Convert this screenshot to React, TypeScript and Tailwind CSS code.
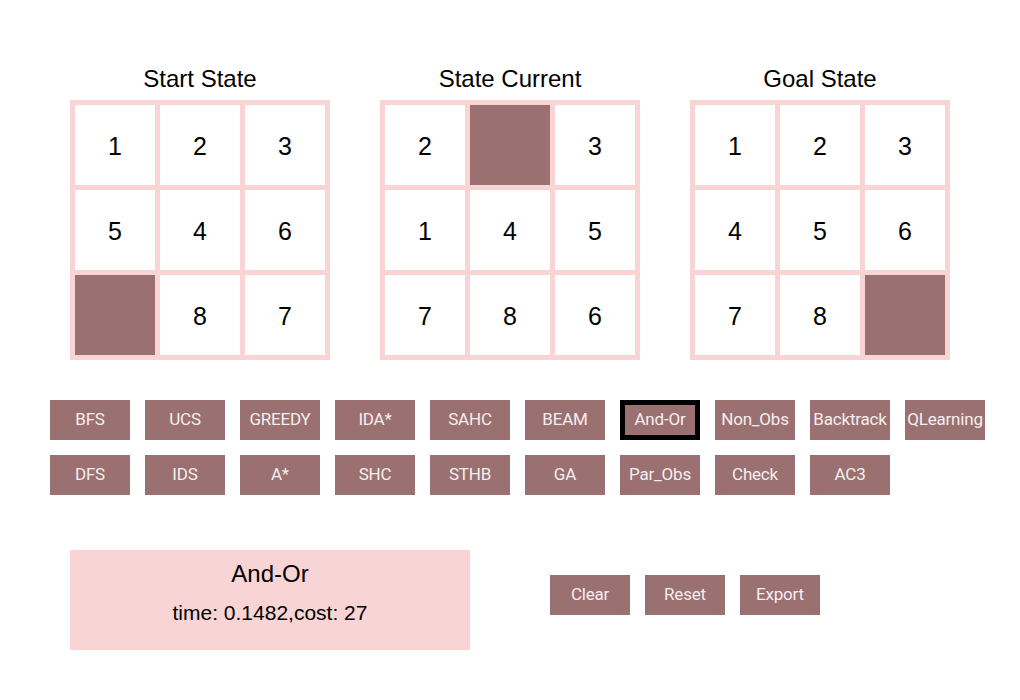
const brown = 'bg-[#9a7070]';

const boards = [
  { title: 'Start State', cells: [1, 2, 3, 5, 4, 6, 0, 8, 7] },
  { title: 'State Current', cells: [2, 0, 3, 1, 4, 5, 7, 8, 6] },
  { title: 'Goal State', cells: [1, 2, 3, 4, 5, 6, 7, 8, 0] },
];

const algos = [
  'BFS', 'UCS', 'GREEDY', 'IDA*', 'SAHC', 'BEAM', 'And-Or', 'Non_Obs', 'Backtrack', 'QLearning',
  'DFS', 'IDS', 'A*', 'SHC', 'STHB', 'GA', 'Par_Obs', 'Check', 'AC3',
];

const Board = ({ title, cells }: { title: string; cells: number[] }) => (
  <div className="flex flex-col items-center">
    <div className="text-[24px] leading-[28px] text-black mb-[7px]">{title}</div>
    <div className="grid grid-cols-[repeat(3,80px)] gap-[5px] bg-[#f8d4d4] p-[5px]">
      {cells.map((n, i) =>
        n === 0 ? (
          <div key={i} className={`w-[80px] h-[80px] ${brown}`} />
        ) : (
          <div key={i} className="w-[80px] h-[80px] bg-white flex items-center justify-center text-[25px] leading-none pt-[3px] text-black">
            {n}
          </div>
        )
      )}
    </div>
  </div>
);

const Btn = ({ label, active = false }: { label: string; active?: boolean }) => (
  <button
    className={`w-[80px] h-[40px] ${brown} text-[#f6eeee] text-[17px] tracking-[-0.2px] flex items-center justify-center whitespace-nowrap overflow-visible ${
      active ? 'border-[5px] border-black' : ''
    }`}
    style={{ fontFamily: 'Roboto, sans-serif' }}
  >
    {label}
  </button>
);

export default function App() {
  return (
    <div className="w-[1020px] h-[700px] bg-white pt-[65px]" style={{ fontFamily: '"Liberation Sans", Arial, sans-serif' }}>
      {/* boards */}
      <div className="flex gap-[50px] pl-[70px]">
        {boards.map((b) => (
          <Board key={b.title} title={b.title} cells={b.cells} />
        ))}
      </div>

      {/* algorithm buttons */}
      <div className="grid grid-cols-[repeat(10,80px)] gap-[15px] pl-[50px] mt-[40px]">
        {algos.map((a) => (
          <Btn key={a} label={a} active={a === 'And-Or'} />
        ))}
      </div>

      {/* result + actions */}
      <div className="flex items-start pl-[70px] mt-[55px]">
        <div className="w-[400px] h-[100px] bg-[#f8d4d4] flex flex-col items-center text-black">
          <div className="text-[24px] leading-[28px] mt-[10px]">And-Or</div>
          <div className="text-[21px] leading-[24px] mt-[13px]">time: 0.1482,cost: 27</div>
        </div>
        <div className="flex gap-[15px] ml-[80px] mt-[25px]">
          <Btn label="Clear" />
          <Btn label="Reset" />
          <Btn label="Export" />
        </div>
      </div>
    </div>
  );
}
